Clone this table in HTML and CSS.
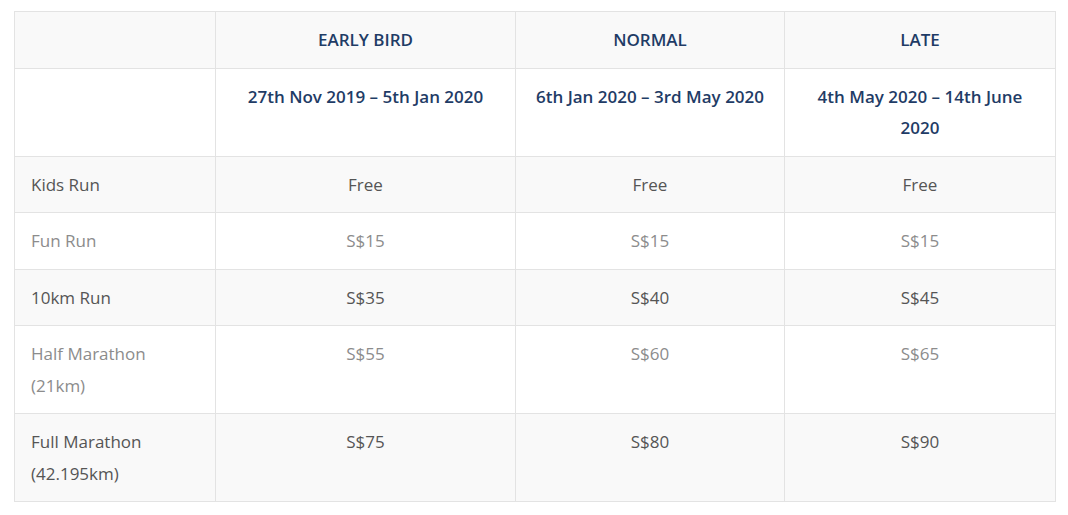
FILE: index.html
```html
<!DOCTYPE html>
<html lang="en">
<head>
<meta charset="utf-8">
<title>Race Fees</title>
<link rel="stylesheet" href="styles.css">
</head>
<body>
<table class="fees">
  <colgroup>
    <col class="c-label">
    <col class="c-early">
    <col class="c-normal">
    <col class="c-late">
  </colgroup>
  <tbody>
    <tr class="odd">
      <td></td>
      <td class="head">EARLY BIRD</td>
      <td class="head">NORMAL</td>
      <td class="head">LATE</td>
    </tr>
    <tr class="even">
      <td></td>
      <td class="head">27th Nov 2019 – 5th Jan 2020</td>
      <td class="head">6th Jan 2020 – 3rd May 2020</td>
      <td class="head">4th May 2020 – 14th June 2020</td>
    </tr>
    <tr class="odd">
      <td class="label">Kids Run</td>
      <td class="val">Free</td>
      <td class="val">Free</td>
      <td class="val">Free</td>
    </tr>
    <tr class="even">
      <td class="label">Fun Run</td>
      <td class="val">S$15</td>
      <td class="val">S$15</td>
      <td class="val">S$15</td>
    </tr>
    <tr class="odd">
      <td class="label">10km Run</td>
      <td class="val">S$35</td>
      <td class="val">S$40</td>
      <td class="val">S$45</td>
    </tr>
    <tr class="even">
      <td class="label">Half Marathon (21km)</td>
      <td class="val">S$55</td>
      <td class="val">S$60</td>
      <td class="val">S$65</td>
    </tr>
    <tr class="odd">
      <td class="label">Full Marathon (42.195km)</td>
      <td class="val">S$75</td>
      <td class="val">S$80</td>
      <td class="val">S$90</td>
    </tr>
  </tbody>
</table>
</body>
</html>
```
FILE: styles.css
```css
html, body {
  margin: 0;
  padding: 0;
  background: #ffffff;
}
body {
  padding: 11px 0 0 14px;
  font-family: "Open Sans", "Noto Sans", sans-serif;
  font-size: 17px;
}
.fees {
  border-collapse: collapse;
  table-layout: fixed;
  width: 1041px;
  border: 1px solid #e3e3e3;
}
.c-label { width: 201px; }
.c-early { width: 300px; }
.c-normal { width: 269px; }
.c-late { width: 271px; }
.fees td {
  border: 1px solid #e3e3e3;
  padding: 12px 16px;
  line-height: 31.5px;
  vertical-align: top;
}
.odd { background: #f9f9f9; }
.even { background: #ffffff; }
.head {
  text-align: center;
  font-weight: 600;
  color: #1f3c66;
}
.val { text-align: center; }
.odd .label, .odd .val { color: #555555; }
.even .label, .even .val { color: #8c8c8c; }
```
